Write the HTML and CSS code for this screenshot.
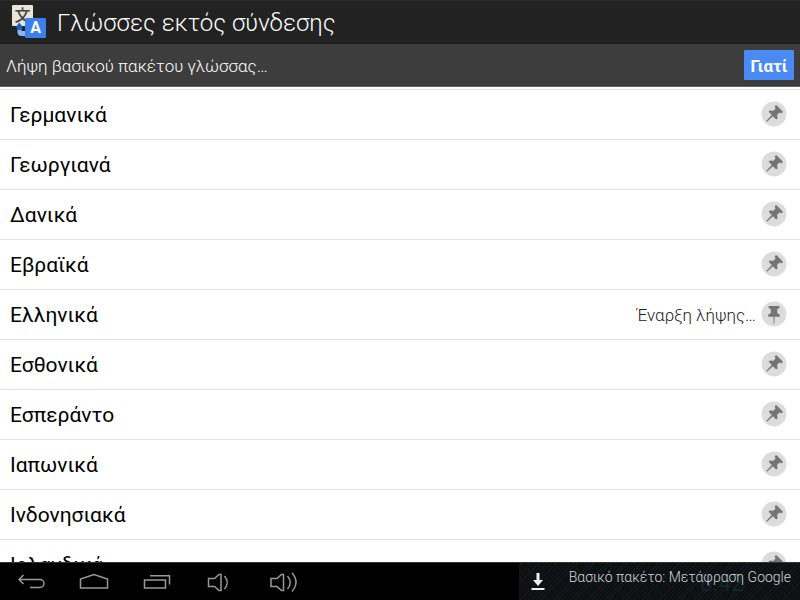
FILE: index.html
```html
<!DOCTYPE html>
<html lang="el">
<head>
    <meta charset="UTF-8">
    <meta name="viewport" content="width=device-width, initial-scale=1.0">
    <title>Γλώσσες εκτός σύνδεσης</title>
    <link rel="stylesheet" href="styles.css">
</head>
<body>

    <!-- shared pin shapes -->
    <svg class="sprite" aria-hidden="true">
        <symbol id="pin" viewBox="0 0 26 26">
            <circle cx="13" cy="13" r="12.5" fill="#dcdcdc"/>
            <path d="M8.500 5h9q1 0 1 1.300t-1 1.300L16.200 8v4l1.500 1q1.300.6 1.300 1.800 0 1-1 1h-4.400L13.300 23h-.6l-.3-7.200H8q-1 0-1-1 0-1.200 1.300-1.800l1.500-1V8l-1.300-.4q-1 0-1-1.300t1-1.300z" fill="#757575"/>
        </symbol>
        <symbol id="pin-tilted" viewBox="0 0 26 26">
            <circle cx="13" cy="13" r="12.5" fill="#dcdcdc"/>
            <path transform="rotate(45 13 13) translate(0 1)" d="M9 4h8q1 0 1 1.300t-1 1.300L15.800 7v3.500l1.500 1q1.300.6 1.300 1.800 0 1-1 1h-3.800L13.500 22.500h-1l-.3-8.200H8.400q-1 0-1-1 0-1.200 1.300-1.800l1.500-1V7L9 6.600q-1 0-1-1.300t1-1.300z" fill="#757575"/>
        </symbol>
    </svg>

    <header class="title-bar">
        <svg class="app-icon" width="34" height="34" viewBox="0 0 34 34" aria-hidden="true">
            <rect x="0" y="0" width="21" height="21" rx="1" fill="#e9e4d8"/>
            <text class="icon-cjk" x="10.500" y="16" text-anchor="middle">文</text>
            <path d="M5.500 22.500h4V26h5v5H9.500q-4 0-4-4z" fill="#8db4f2"/>
            <path d="M7.200 17.500l4 5H9.500V25h-4v-2.500H3.500z" fill="#1f5fc4"/>
            <rect x="13" y="13" width="21" height="20" rx="1" fill="#3b80ee"/>
            <text class="icon-latin" x="23.500" y="28" text-anchor="middle">A</text>
        </svg>
        <h1>Γλώσσες εκτός σύνδεσης</h1>
    </header>

    <div class="notice">
        <p>Λήψη βασικού πακέτου γλώσσας…</p>
        <button class="why-btn" type="button">Γιατί</button>
    </div>

    <main class="content">
        <ul class="languages">
            <li><span class="name">Γερμανικά</span><button class="pin" type="button" aria-label="Γερμανικά"><svg><use href="#pin-tilted"/></svg></button></li>
            <li><span class="name">Γεωργιανά</span><button class="pin" type="button" aria-label="Γεωργιανά"><svg><use href="#pin-tilted"/></svg></button></li>
            <li><span class="name">Δανικά</span><button class="pin" type="button" aria-label="Δανικά"><svg><use href="#pin-tilted"/></svg></button></li>
            <li><span class="name">Εβραϊκά</span><button class="pin" type="button" aria-label="Εβραϊκά"><svg><use href="#pin-tilted"/></svg></button></li>
            <li><span class="name">Ελληνικά</span><span class="status">Έναρξη λήψης…</span><button class="pin" type="button" aria-label="Ελληνικά"><svg><use href="#pin"/></svg></button></li>
            <li><span class="name">Εσθονικά</span><button class="pin" type="button" aria-label="Εσθονικά"><svg><use href="#pin-tilted"/></svg></button></li>
            <li><span class="name">Εσπεράντο</span><button class="pin" type="button" aria-label="Εσπεράντο"><svg><use href="#pin-tilted"/></svg></button></li>
            <li><span class="name">Ιαπωνικά</span><button class="pin" type="button" aria-label="Ιαπωνικά"><svg><use href="#pin-tilted"/></svg></button></li>
            <li><span class="name">Ινδονησιακά</span><button class="pin" type="button" aria-label="Ινδονησιακά"><svg><use href="#pin-tilted"/></svg></button></li>
            <li><span class="name">Ιρλανδικά</span><button class="pin" type="button" aria-label="Ιρλανδικά"><svg><use href="#pin-tilted"/></svg></button></li>
        </ul>
    </main>

    <footer class="system-bar">
        <nav class="nav-keys">
            <button type="button" aria-label="Πίσω">
                <svg width="32" height="20" viewBox="0 0 32 20"><path d="M8.500 3L4 7.500l4.500 4.500M4 7.500h21a3.800 3.800 0 0 1 0 8H15"/></svg>
            </button>
            <button type="button" aria-label="Αρχική">
                <svg width="32" height="20" viewBox="0 0 32 20"><path d="M2.500 16V7L16 2.500 29.500 7v9z"/></svg>
            </button>
            <button type="button" aria-label="Πρόσφατα">
                <svg width="32" height="20" viewBox="0 0 32 20"><path d="M3.500 8h21v8h-21zM9 3.800h19.500V12.500"/></svg>
            </button>
            <button type="button" aria-label="Μείωση έντασης">
                <svg width="32" height="20" viewBox="0 0 32 20"><path d="M4.500 6.500h6l4.500-4h2v16h-2l-4.500-4h-6zM20.500 4q5.500 6.500 0 13"/></svg>
            </button>
            <button type="button" aria-label="Αύξηση έντασης">
                <svg width="32" height="20" viewBox="0 0 32 20"><path d="M4 6.500h6l4.500-4h2v16h-2l-4.500-4H4zM20.500 4q5.500 6.500 0 13M25 1q8 9 0 18.500"/></svg>
            </button>
        </nav>
        <div class="ticker">
            <span class="clock" aria-hidden="true">8:42</span>
            <svg width="14" height="18" viewBox="0 0 14 18" aria-hidden="true">
                <path d="M5.500 0h3v7h3.500L7 13 2 7h3.500zM.5 15h13v2H.5z" fill="#eee"/>
            </svg>
            <p>Βασικό πακέτο: Μετάφραση Google</p>
        </div>
    </footer>

</body>
</html>
```
FILE: styles.css
```css
* {
    box-sizing: border-box;
}

body {
    margin: 0;
    height: 100vh;
    display: flex;
    flex-direction: column;
    overflow: hidden;
    background-color: #fff;
    color: #000;
    font-family: Roboto, "Noto Sans", sans-serif;
}

h1, p, ul {
    margin: 0;
    padding: 0;
}

button {
    padding: 0;
    border: none;
    background: none;
    font-family: inherit;
    cursor: pointer;
}

svg {
    display: block;
}

.sprite {
    position: absolute;
    width: 0;
    height: 0;
}

/* title bar */
.title-bar {
    display: flex;
    align-items: center;
    gap: 11px;
    height: 44px;
    flex-shrink: 0;
    padding: 0 12px;
    background-color: #222;
    border-top: 1px solid #2c2c2c;
    border-bottom: 1px solid #1a1a1a;
}

.title-bar h1 {
    padding-top: 2px;
    color: #fff;
    font-size: 24px;
    line-height: 32px;
    font-weight: 300;
}

.app-icon {
    overflow: visible;
}

.icon-cjk {
    fill: #444;
    font-family: "Noto Sans CJK JP", sans-serif;
    font-size: 16px;
    font-weight: 500;
}

.icon-latin {
    fill: #fff;
    font-family: Roboto, sans-serif;
    font-size: 16px;
    font-weight: 700;
}

/* download notice */
.notice {
    display: flex;
    align-items: center;
    justify-content: space-between;
    height: 43px;
    flex-shrink: 0;
    padding: 0 6px;
    background-color: #3d3d3d;
    border-bottom: 1px solid #606060;
}

.notice p {
    padding-top: 2px;
    color: #fff;
    font-size: 17px;
    line-height: 24px;
    font-weight: 300;
}

.why-btn {
    height: 30px;
    width: 50px;
    padding-top: 2px;
    border-radius: 1px;
    background-color: #4a8af4;
    color: #fff;
    font-size: 17px;
    font-weight: 700;
}

/* language list */
.content {
    flex: 1;
    min-height: 0;
    overflow: hidden;
    padding-top: 2px;
}

.languages {
    list-style: none;
    border-top: 1px solid #e2e2e2;
}

.languages li {
    display: flex;
    align-items: center;
    gap: 5px;
    height: 50px;
    padding: 0 13px 0 10px;
    border-bottom: 1px solid #e2e2e2;
}

.name {
    flex: 1;
    font-size: 21px;
    line-height: 28px;
}

.status {
    color: #222;
    font-size: 17px;
    line-height: 24px;
    font-weight: 300;
}

.pin {
    padding-bottom: 2px;
}

.pin svg {
    width: 26px;
    height: 26px;
}

/* system bar */
.system-bar {
    display: flex;
    justify-content: space-between;
    height: 38px;
    flex-shrink: 0;
    background-color: #000;
    border-top: 1px solid #333;
}

.nav-keys {
    display: flex;
    align-items: center;
    gap: 31px;
    padding-left: 15px;
}

.nav-keys path {
    fill: none;
    stroke: #999;
    stroke-width: 1.5;
}

.ticker {
    position: relative;
    display: flex;
    align-items: center;
    gap: 24px;
    padding: 0 9px 0 12px;
    background: repeating-linear-gradient(135deg, #0b0f11 0, #0b0f11 2px, #14191b 2px, #14191b 3px);
}

.ticker p {
    position: relative;
    padding-bottom: 10px;
    color: #d4d4d4;
    font-size: 14px;
    line-height: 20px;
    font-weight: 300;
}

/* clock dimmed under the ticker text */
.clock {
    position: absolute;
    right: 56px;
    bottom: 4px;
    color: #10252e;
    font-size: 23px;
    line-height: 24px;
}
```
